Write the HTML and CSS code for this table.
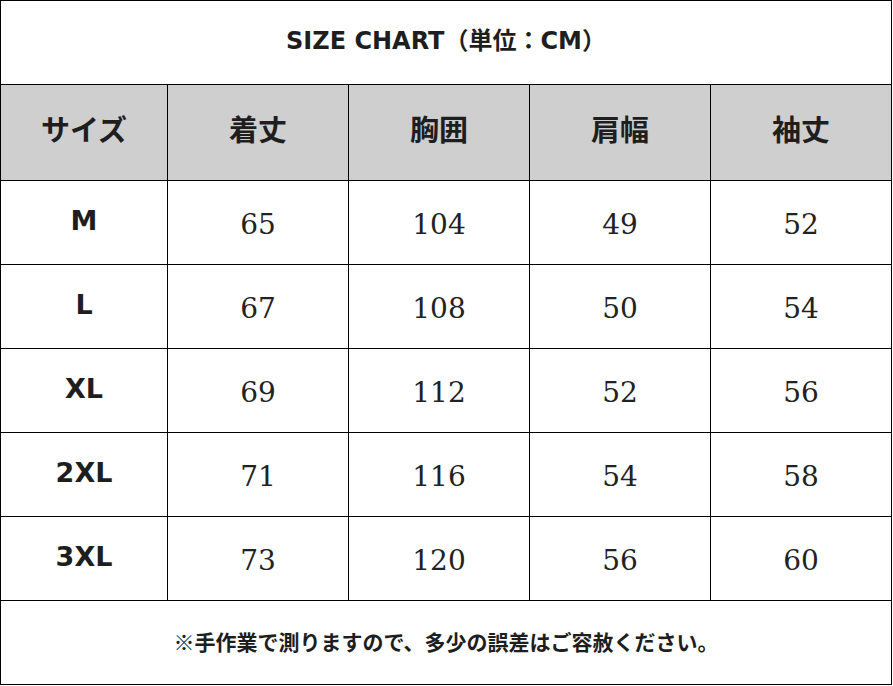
FILE: index.html
```html
<!DOCTYPE html>
<html lang="ja">
<head>
<meta charset="utf-8">
<title>SIZE CHART</title>
<link rel="stylesheet" href="styles.css">
</head>
<body>
<div class="chart">
  <div class="cell title">SIZE CHART（単位：CM）</div>

  <div class="cell head">サイズ</div>
  <div class="cell head">着丈</div>
  <div class="cell head">胸囲</div>
  <div class="cell head">肩幅</div>
  <div class="cell head">袖丈</div>

  <div class="cell size">M</div>
  <div class="cell num">65</div>
  <div class="cell num">104</div>
  <div class="cell num">49</div>
  <div class="cell num">52</div>

  <div class="cell size">L</div>
  <div class="cell num">67</div>
  <div class="cell num">108</div>
  <div class="cell num">50</div>
  <div class="cell num">54</div>

  <div class="cell size">XL</div>
  <div class="cell num">69</div>
  <div class="cell num">112</div>
  <div class="cell num">52</div>
  <div class="cell num">56</div>

  <div class="cell size">2XL</div>
  <div class="cell num">71</div>
  <div class="cell num">116</div>
  <div class="cell num">54</div>
  <div class="cell num">58</div>

  <div class="cell size">3XL</div>
  <div class="cell num">73</div>
  <div class="cell num">120</div>
  <div class="cell num">56</div>
  <div class="cell num">60</div>

  <div class="cell note">※手作業で測りますので、多少の誤差はご容赦ください。</div>
</div>
</body>
</html>
```

FILE: styles.css
```css
html, body {
  margin: 0;
  padding: 0;
  background: #ffffff;
}

.chart {
  width: 892px;
  box-sizing: border-box;
  padding: 1px;
  background: #000000;
  display: grid;
  grid-template-columns: 166px 180px 180px 180px 180px;
  grid-template-rows: 83px 95px 83px 83px 83px 83px 83px 83px;
  gap: 1px;
}

.cell {
  background: #ffffff;
  display: flex;
  align-items: center;
  justify-content: center;
  color: #1e1e1e;
  font-family: "DejaVu Sans", "Noto Sans CJK JP", sans-serif;
  box-sizing: border-box;
}

.title {
  grid-column: 1 / -1;
  font-size: 24px;
  font-weight: bold;
  padding-bottom: 8px;
}

.head {
  background: #cfcfcf;
  font-family: "Noto Sans CJK JP", sans-serif;
  font-size: 29px;
  font-weight: bold;
  padding-bottom: 9px;
}

.size {
  font-size: 27px;
  font-weight: bold;
  padding-bottom: 5px;
}

.num {
  font-family: "DejaVu Serif", "Liberation Serif", serif;
  font-size: 28px;
  font-weight: normal;
  color: #222222;
  padding-top: 3px;
}

.note {
  grid-column: 1 / -1;
  font-family: "Noto Sans CJK JP", sans-serif;
  font-size: 21px;
  font-weight: bold;
  padding-bottom: 4px;
}
```
